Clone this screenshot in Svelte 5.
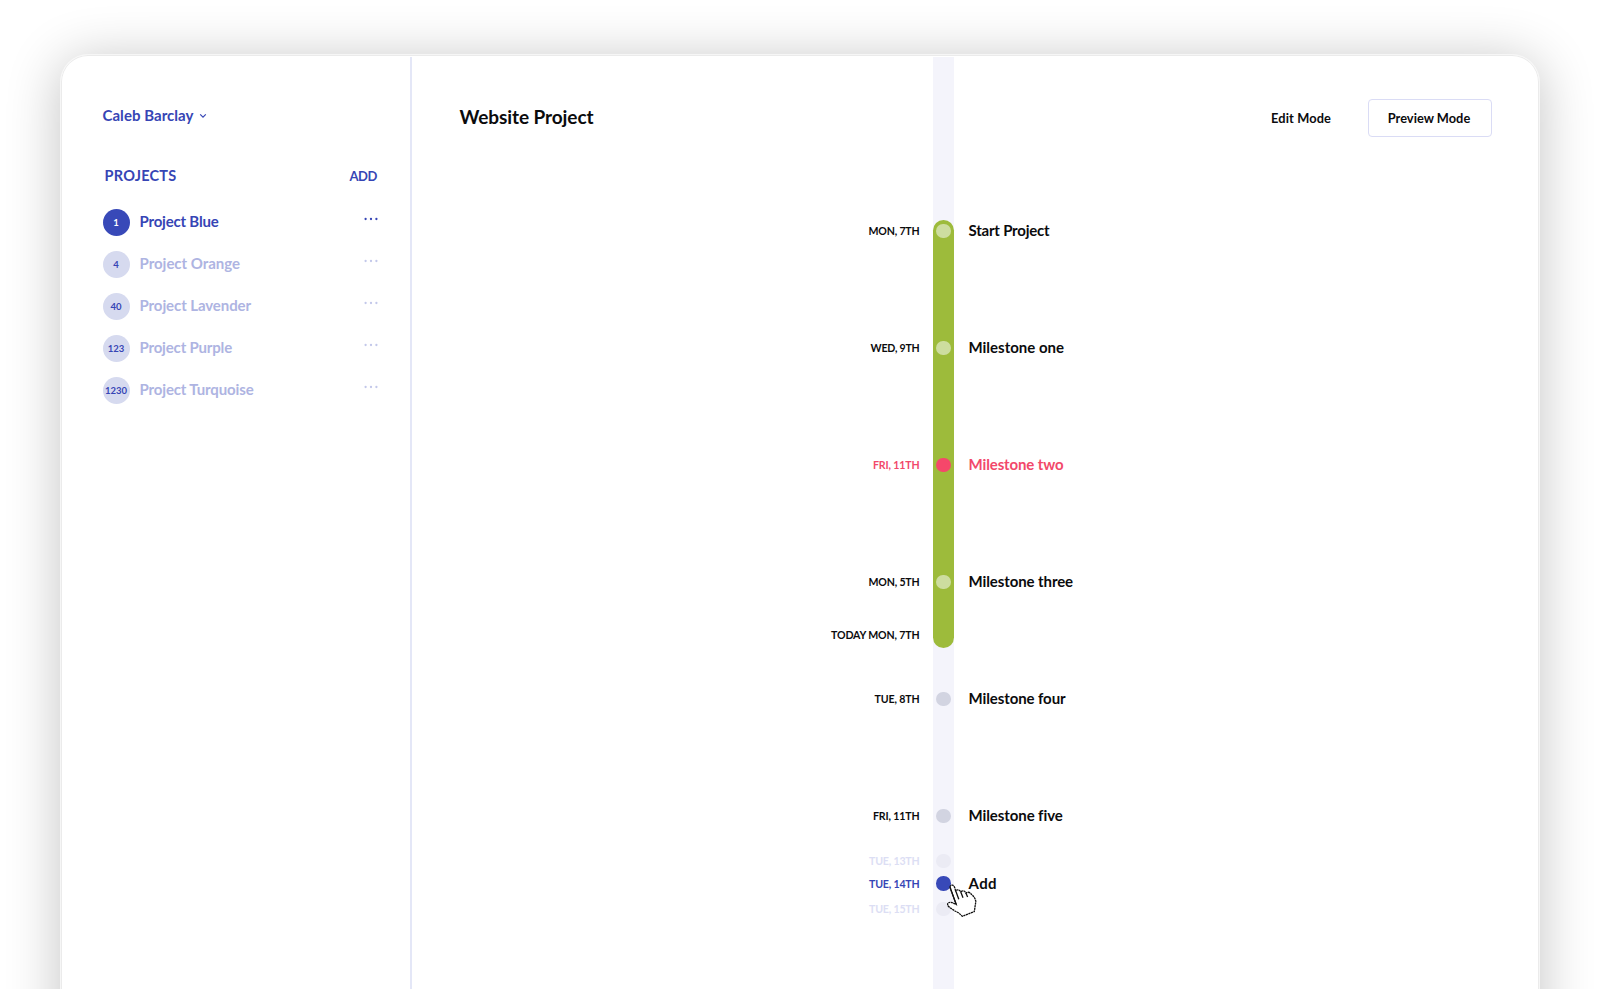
<script>
  const projects = [
    { count: '1', name: 'Project Blue', width: 79, active: true },
    { count: '4', name: 'Project Orange', width: 100.5 },
    { count: '40', name: 'Project Lavender', width: 111.5 },
    { count: '123', name: 'Project Purple', width: 92.5 },
    { count: '1230', name: 'Project Turquoise', width: 114 },
  ];

  // gap: distance to the centre of the previous entry
  const entries = [
    { date: 'MON, 7TH', dw: 51, label: 'Start Project', lw: 81, kind: 'done', gap: 231 },
    { date: 'WED, 9TH', dw: 49, label: 'Milestone one', lw: 95.5, kind: 'done', gap: 117 },
    { date: 'FRI, 11TH', dw: 46.5, label: 'Milestone two', lw: 95, kind: 'late', gap: 117 },
    { date: 'MON, 5TH', dw: 51, label: 'Milestone three', lw: 104.5, kind: 'done', gap: 117 },
    { date: 'TODAY MON, 7TH', dw: 88.5, kind: 'today', gap: 53 },
    { date: 'TUE, 8TH', dw: 45, label: 'Milestone four', lw: 97, kind: 'next', gap: 64 },
    { date: 'FRI, 11TH', dw: 46.5, label: 'Milestone five', lw: 94, kind: 'next', gap: 117 },
    { date: 'TUE, 13TH', dw: 50.5, kind: 'ghost', gap: 45 },
    { date: 'TUE, 14TH', dw: 50.5, label: 'Add', lw: 28.5, kind: 'adding', gap: 22.5 },
    { date: 'TUE, 15TH', dw: 50.5, kind: 'ghost', gap: 25.5 },
  ];

  // Adjusts letter-spacing so that the text sets to the given width.
  function track(node, width) {
    const natural = node.getBoundingClientRect().width;
    node.style.letterSpacing = `${(width - natural) / node.textContent.length}px`;
  }
</script>

<div class="page">
<div class="window">
  <aside>
    <button class="user">
      <span use:track={91}>Caleb Barclay</span>
      <svg width="8" height="6" viewBox="0 0 8 6"><path d="M1.2 1.4 4 4.1 6.8 1.4" fill="none" stroke="currentColor" stroke-width="1.2" /></svg>
    </button>
    <div class="heading">
      <h2><span use:track={72}>PROJECTS</span></h2>
      <button class="add"><span use:track={27.5}>ADD</span></button>
    </div>
    <ul>
      {#each projects as p}
        <li class:active={p.active}>
          <span class="count">{p.count}</span>
          <span class="name"><span use:track={p.width}>{p.name}</span></span>
          <svg class="more" width="14" height="4" viewBox="0 0 14 4"><circle cx="1.6" cy="2" r="1.15" /><circle cx="7" cy="2" r="1.15" /><circle cx="12.4" cy="2" r="1.15" /></svg>
        </li>
      {/each}
    </ul>
  </aside>

  <main>
    <header>
      <h1><span use:track={134}>Website Project</span></h1>
      <div class="modes">
        <button class="edit"><span use:track={60}>Edit Mode</span></button>
        <button class="preview"><span use:track={82.5}>Preview Mode</span></button>
      </div>
    </header>
    <section class="timeline">
      <div class="track"></div>
      <div class="progress"></div>
      <ol>
        {#each entries as e}
          <li class={e.kind} style="height:{e.gap}px">
            <span class="date"><span use:track={e.dw}>{e.date}</span></span>
            <span class="slot">{#if e.kind !== 'today'}<i></i>{/if}</span>
            <span class="label">{#if e.label}<span use:track={e.lw}>{e.label}</span>{/if}</span>
          </li>
        {/each}
      </ol>
      <svg class="cursor" width="33" height="37" viewBox="0 0 33 37">
        <path class="hand" d="M4 5.2C4.2 3.6 5.2 2.8 6.4 3.1C7.6 3.4 8.4 4.6 8.8 6L9.6 8.6C11 7.4 13.8 7.8 14.8 9.8C16.4 8.2 19 8.8 20 11C21.8 9.6 24.4 10.2 25.4 12.4C27.8 14 29.6 17 29.8 19.7L28.3 29.6L16.3 34.3L12.8 31L9 29L3.6 25.4C1.4 23.8 1 21.6 2.4 20.8C3.8 19.8 6 20.2 10.2 22.4Z" />
        <path d="M4 5.2 10.2 22.4M9.4 8 12.8 17.2M14.6 9.6 17 15.8M19.8 10.8 21.6 15" fill="none" />
      </svg>
    </section>
  </main>
</div>
</div>

<style>
  :global(body) { background: #fff; }
  * { box-sizing: border-box; }
  .page { height: 989px; overflow: hidden; padding: 54px 60px 0; }
  .window {
    width: 1480px; height: 1000px;
    border: 1px solid #f6f6f6; border-radius: 28px;
    box-shadow: inset 0 0 0 1px #ebebeb, 0 6px 54px rgba(0, 0, 0, .24);
    background: #fff; display: flex; padding-top: 2px;
    font-family: Lato, "Open Sans", sans-serif; font-weight: 700; color: #0b0b0d;
  }
  h1, h2, ul, ol { margin: 0; padding: 0; font-weight: inherit; list-style: none; }
  button { font: inherit; color: inherit; background: none; border: 0; padding: 0; white-space: nowrap; }
  span { white-space: nowrap; }
  aside { width: 351px; border-right: 2px solid #e4e7f7; padding: 48px 33px 0 41.5px; color: #3645b5; }
  .user { display: flex; align-items: center; gap: 5px; font-size: 15px; line-height: 20px; height: 20px; }
  .user svg { margin-top: 2px; }
  .heading { display: flex; justify-content: space-between; margin-top: 40px; padding-left: 2px; height: 20px; }
  .heading h2 { font-size: 14.5px; line-height: 21px; }
  .add { font-size: 13px; line-height: 22px; height: 22px; }
  aside ul { margin-top: 24px; }
  aside li { display: flex; align-items: center; height: 27px; margin-bottom: 15px; }
  .count { width: 27px; height: 27px; border-radius: 50%; background: #d6daef; display: grid; place-items: center; font-size: 9.5px; line-height: 27px; }
  .name { margin-left: 10px; font-size: 15px; line-height: 20px; color: #aeb4e2; margin-top: -4px; }
  .more { margin: -7px -1px 0 auto; fill: #c3c8ea; }
  .active .count { background: #3849b8; color: #fff; }
  .active .name { color: #3645b5; }
  .active .more { fill: #3645b5; }
  main { flex: 1; display: flex; flex-direction: column; }
  header { display: flex; justify-content: space-between; padding: 42px 47px 0 47.5px; height: 80px; }
  h1 { font-size: 19px; line-height: 36px; }
  .modes { display: flex; height: 38px; font-size: 12.8px; }
  .edit { margin-right: 37px; }
  .preview { width: 124px; border: 1px solid #dadcf5; border-radius: 4px; padding-right: 2px; }
  .timeline { position: relative; margin-top: -80px; height: 1010px; padding-left: 400px; pointer-events: none; }
  .track { position: absolute; left: 521px; top: 0; width: 20.5px; height: 100%; background: #f4f4fb; }
  .progress { position: absolute; left: 521px; top: 162.5px; width: 20.5px; height: 428.5px; border-radius: 10.5px; background: #9dbb3b; }
  ol { position: relative; margin-top: -57px; }
  .timeline li { display: grid; grid-template-columns: 107.5px 49px 1fr; align-items: end; }
  .date { font-size: 10.6px; line-height: 20px; height: 10px; text-align: right; }
  .slot { height: 7.25px; display: flex; justify-content: center; margin-left: -1.5px; }
  .slot i { flex: none; width: 14.5px; height: 14.5px; border-radius: 50%; background: #d2d4e1; }
  .label { font-size: 15px; line-height: 19px; height: 10px; }
  .done i { background: #cddd9f; }
  .late { color: #f2486a; }
  .late i { background: #f5476a; }
  .ghost { color: #dcdef4; }
  .ghost i { background: #ebebf4; }
  .adding .date { color: #3645b5; }
  .adding i { background: #3849b8; }
  .cursor { position: absolute; left: 534px; top: 825px; stroke: #111; stroke-width: 1.3; }
  .hand { fill: #fff; stroke-dasharray: 2.2 .5; }
</style>
